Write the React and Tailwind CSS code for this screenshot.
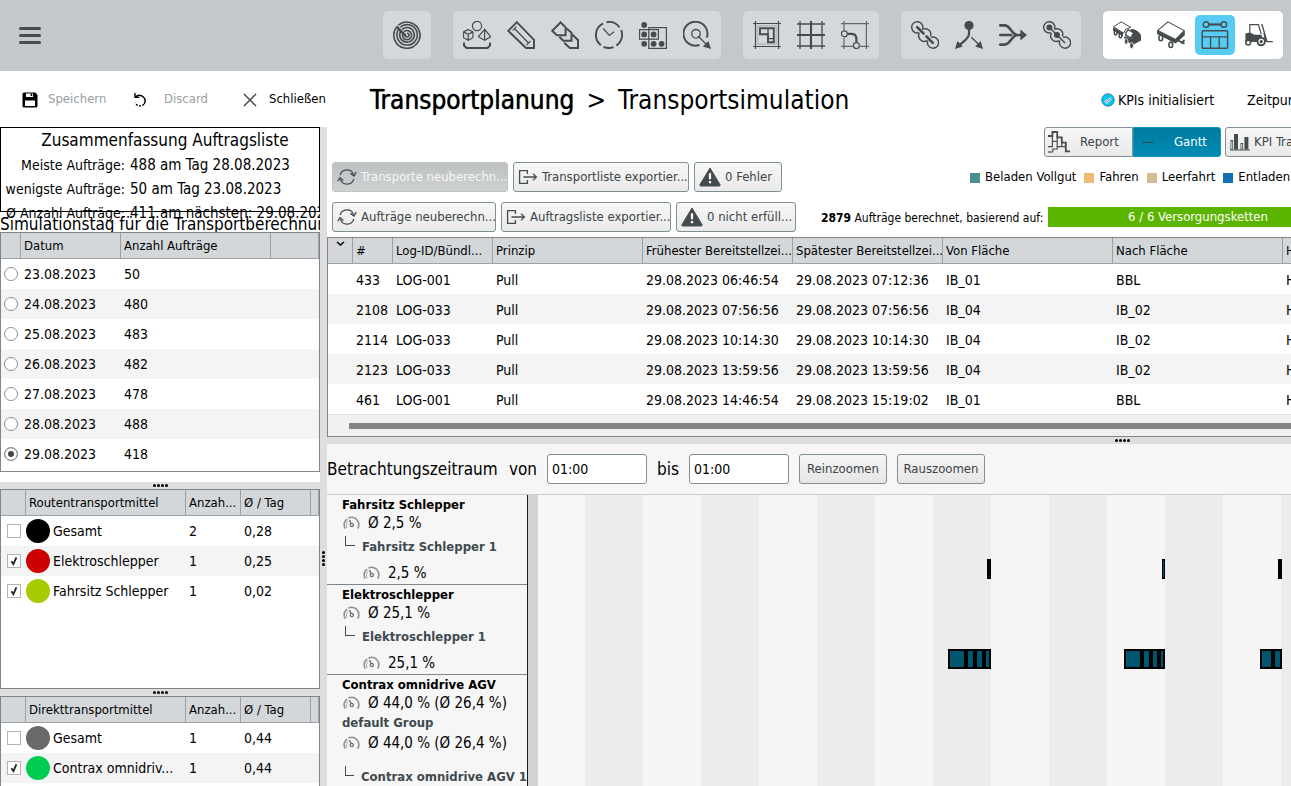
import React, { useState } from 'react';
import clsx from 'clsx';

/* ---------- toolbar icons, all on a 28x28 grid ---------- */

const Icon = ({ children, sw = 1.5 }) => (
    <svg
        width="28"
        height="28"
        viewBox="0 0 28 28"
        fill="none"
        stroke="#464b4e"
        strokeWidth={sw}
        className="shrink-0"
        aria-hidden="true"
    >
        {children}
    </svg>
);

const RadarIcon = () => (
    <Icon sw={1.6}>
        <path d="M5.4 4.2A13.1 13.1 0 1 1 3.2 6.6" />
        <path d="M7.4 6.2A10.2 10.2 0 1 1 5.4 8.6" />
        <path d="M9.2 8.4A7.3 7.3 0 1 1 7.6 10.4" />
        <path d="M11 10.6A4.6 4.6 0 1 1 9.9 12" />
        <path d="M14 12.2A1.9 1.9 0 1 1 12.2 14" />
        <path d="M3.4 5.4l9.4 9.4" strokeWidth="2.4" />
    </Icon>
);

const ObjectsIcon = () => (
    <Icon sw={1.2}>
        <circle cx="14" cy="5" r="4.6" />
        <path d="M5.2 8.5l4.7 2.4v5.8l-4.7 2.6-4.7-2.6v-5.8zM.5 10.9l4.7 2.4 4.7-2.4M5.2 13.3v6" />
        <path d="M21.6 8.3l-6.2 7.4 6.2 3.6 6-3.6zM21.6 8.3v11" />
        <path d="M1 21.5v3l2.5 2.5h21l2.5-2.5v-3" strokeWidth="2" />
    </Icon>
);

const RulerIcon = () => (
    <Icon sw={1.9}>
        <path d="M1.2 9.8L9.8 1.2 27 18.8V27h-8z" />
        <path d="M7.5 7.5l14 14.5M5.8 9.3l3.6-3.6M19.6 24l3.8-3.8" strokeWidth="1.2" />
    </Icon>
);

const StackIcon = () => (
    <Icon sw={2}>
        <path d="M1.3 9.8L9.6 1.4l5 5v7.8H5.8z" />
        <path d="M15.5 7.5l5 4.2v8h-8.2l-4-4" />
        <path d="M21.2 13.5L27 19v8h-8.2l-5.6-5.3" />
    </Icon>
);

const ClockIcon = () => (
    <Icon sw={1.9}>
        <path d="M11.5 1.2A13 13 0 0 1 24.5 6.4M26.2 9.2A13 13 0 0 1 21.5 24.6M18.5 26.2A13 13 0 0 1 8.5 25.8M5.8 24.2A13 13 0 0 1 8.2 2.4" />
        <path d="M8.2 7.5l6.2 7 4.6-3.8" strokeWidth="1.2" />
    </Icon>
);

const MatrixIcon = () => (
    <Icon sw={1.2}>
        <rect x=".6" y="8.6" width="18.8" height="9.6" />
        <rect x="9.8" y="6.6" width="17.6" height="20.8" />
        <g fill="#464b4e" stroke="none">
            <circle cx="5.2" cy="4" r="2.9" />
            <circle cx="5.2" cy="13.4" r="2.9" />
            <circle cx="14.6" cy="13.4" r="2.9" />
            <circle cx="5.2" cy="22.8" r="2.9" />
            <circle cx="14.6" cy="22.8" r="2.9" />
            <circle cx="22.6" cy="22.8" r="2.9" />
        </g>
    </Icon>
);

const TargetIcon = () => (
    <Icon sw={1.9}>
        <path d="M23.8 16.6A12 12 0 1 0 16.5 24" />
        <circle cx="13" cy="12.8" r="4.3" strokeWidth="1.3" />
        <path d="M15 15l8 8" strokeWidth="1.3" />
        <path d="M28 28l-2.6-8-5.6 5.6z" fill="#464b4e" stroke="none" />
    </Icon>
);

const LayoutIcon = () => (
    <Icon sw={1.2}>
        <path d="M2.5 0v28M25.5 0v28M0 2.5h28M0 25.5h28" />
        <path d="M4.8 4.8h18.4v18.4H4.8z" strokeWidth=".5" opacity=".6" />
        <path d="M7 7.2h13.8v14H15v-8H7z" strokeWidth="1.9" />
        <path d="M15 7v6.5M15 17.6h5.6" strokeWidth="1.3" />
    </Icon>
);

const GridIcon = () => (
    <Icon sw={1.3}>
        <path d="M3 0v28M25 0v28M0 3h28M0 25h28" />
        <path d="M14 0v28M0 14h28" strokeWidth="2.1" />
    </Icon>
);

const RouteIcon = () => (
    <Icon sw={1.2}>
        <path d="M3 0v9M3 17v11M0 2.6h28M25.4 0v28M0 25.4h12M19 25.4h9" opacity=".8" />
        <path d="M6.4 12.8h4c3.4 0 5 1.7 5 5v3.4" strokeWidth="2.2" />
        <circle cx="3.4" cy="12.8" r="3" />
        <circle cx="15.4" cy="24.6" r="3" />
    </Icon>
);

const ChainIcon = () => (
    <Icon sw={1.4}>
        <path d="M11.4 8.6A5.6 5.6 0 1 0 8.2 11.6" />
        <path d="M12 8.2a5.6 5.6 0 0 1 7.4 7.2M8.4 12a5.6 5.6 0 0 0 7.6 7.6" />
        <path d="M16.8 19.6a5.6 5.6 0 1 0 3.2-3.2" />
        <path d="M6.2 6.2l6.3 6.3M15.5 15.5l6.3 6.3" strokeWidth="2.6" strokeLinecap="round" />
    </Icon>
);

const ForkIcon = () => (
    <Icon sw={2.2}>
        <path d="M14 6v7c0 3-2 4.4-4 6.4l-5.6 4.8" />
        <path d="M16.4 16.2l7.6 7.6" strokeWidth="1.3" />
        <g fill="#464b4e" stroke="none">
            <circle cx="14" cy="4.5" r="4.6" />
            <path d="M0 28l2.4-8 5.4 5.6zM28 28l-2.4-8-5.4 5.6z" />
        </g>
    </Icon>
);

const MergeIcon = () => (
    <Icon sw={2.6}>
        <path d="M1.2 4.4h4.3c3 0 4.6 2 6.6 4.8 2.2 3 3.6 4.8 7 4.8h4M1.2 14h11M1.2 23.6h4.3c3 0 4.6-2 6.6-4.8 2.2-3 3.6-4.8 7-4.8" strokeLinecap="round" />
        <path d="M21.4 8.6L28 14l-6.6 5.4z" fill="#464b4e" stroke="none" />
    </Icon>
);

const ChainNodesIcon = () => (
    <Icon sw={1.4}>
        <path d="M11.4 8.6A5.6 5.6 0 1 0 8.2 11.6" />
        <path d="M12 8.2a5.6 5.6 0 0 1 7.4 7.2M8.4 12a5.6 5.6 0 0 0 7.6 7.6" />
        <path d="M16.8 19.6a5.6 5.6 0 1 0 3.2-3.2" />
        <path d="M6.2 6.2L22 22" />
        <circle cx="6.4" cy="6.4" r="3" fill="#464b4e" stroke="none" />
        <circle cx="14" cy="14" r="3" fill="#464b4e" stroke="none" />
    </Icon>
);

const TuggerIcon = () => (
    <Icon sw={1}>
        <path d="M.6 5.8L8.2.8l9.6 5.6-5 1.8-2.2 4z" />
        <path d="M0 6.2l10 5.6v3.6L0 10z" fill="#464b4e" stroke="none" />
        <ellipse cx="2.6" cy="12" rx="1.3" ry="1.9" fill="#fff" strokeWidth="1.5" />
        <ellipse cx="7.4" cy="15" rx="1.3" ry="1.9" fill="#fff" strokeWidth="1.5" />
        <path d="M17.6 8.2c3.4-.8 9 2.4 10.4 6.2v5.2l-8.6 4.6-8-5.6V15l8 3z" fill="#464b4e" stroke="none" />
        <path d="M12.6 14.2c.2-2.4 1.2-4.4 2.6-5.4l5.6 3.2c-1.4 1-2.2 2.8-2.4 5.2z" fill="#fff" strokeWidth="1.3" />
        <ellipse cx="13.2" cy="20.4" rx="1.8" ry="2.8" fill="#464b4e" stroke="#fff" strokeWidth=".8" />
        <ellipse cx="18.6" cy="24.6" rx="1.9" ry="3" fill="#464b4e" stroke="#fff" strokeWidth=".8" />
    </Icon>
);

const TrailerIcon = () => (
    <Icon sw={1.1}>
        <path d="M.8 9.4L11 .8 27.2 9.6l-8.8 9z" />
        <path d="M0 9.2l18.4 9L27.8 9.4v4.8l-9.2 8.4L0 13z" fill="#464b4e" stroke="none" />
        <ellipse cx="3.8" cy="17" rx="1.9" ry="2.7" fill="#fff" strokeWidth="1.6" />
        <ellipse cx="13.8" cy="23.8" rx="1.9" ry="2.7" fill="#fff" strokeWidth="1.6" />
        <path d="M20.5 19.2l7 3.4M27.6 19l-3.4 3.4" strokeWidth="1.8" />
    </Icon>
);

const ScheduleIcon = () => (
    <Icon sw={1.4}>
        <circle cx="5" cy="3.5" r="2.8" />
        <circle cx="22.8" cy="3.5" r="2.8" />
        <path d="M7.8 3.5h12.2" strokeWidth="2.2" />
        <rect x="1.2" y="9.8" width="25.4" height="17.4" rx="1" />
        <path d="M1.2 15.8h25.4M9.6 15.8v11.4M18.2 15.8v11.4" strokeWidth="1.3" />
    </Icon>
);

const ForkliftIcon = () => (
    <Icon sw={1.2}>
        <path d="M4.8 12.4V3.6h8.6l2.8 9.4" />
        <path d="M.4 12.6l4.4-1 4.6 2.2h7l1.4 4.2v3H.4z" fill="#464b4e" stroke="none" />
        <circle cx="3.2" cy="21.6" r="2.4" fill="#fff" strokeWidth="1.5" />
        <circle cx="16.2" cy="20.6" r="3.7" fill="#fff" strokeWidth="1.9" />
        <circle cx="16.2" cy="20.6" r="1" fill="#464b4e" />
        <path d="M16.8 3l5.2 17.6h5.8M19 12l1.6 8.6" strokeWidth="1.3" />
    </Icon>
);

/* ---------- small icons ---------- */

const RefreshIcon = () => (
    <svg width="20" height="18" viewBox="0 0 20 18" fill="none" stroke="#464b4e" strokeWidth="1.3" className="shrink-0" aria-hidden="true">
        <path d="M3.2 7.2a7 7 0 0 1 13.4-.6M16.8 10.8a7 7 0 0 1-13.4.6" />
        <path d="M.8 13.2L3 9.8l3.4 2.6M19.2 4.2L17 8l-3.6-2.6" />
    </svg>
);

const ExportIcon = () => (
    <svg width="20" height="16" viewBox="0 0 20 16" fill="none" stroke="#464b4e" strokeWidth="1.3" className="shrink-0" aria-hidden="true">
        <path d="M9.4 5V1.6H1.6v12.8h7.8V11M5.4 8h12.8M15 4.6L18.4 8 15 11.4" />
    </svg>
);

const WarnIcon = () => (
    <svg width="22" height="20" viewBox="0 0 22 20" className="shrink-0" aria-hidden="true">
        <path d="M11 1L21 17.6a1 1 0 0 1-.9 1.4H1.9a1 1 0 0 1-.9-1.4z" fill="#464b4e" stroke="#464b4e" strokeLinejoin="round" />
        <path d="M11 6.2v6M11 14v2.2" stroke="#fff" strokeWidth="2.2" />
    </svg>
);

const GaugeIcon = () => (
    <svg width="17" height="14" viewBox="0 0 17 14" fill="none" stroke="#8f9294" strokeWidth="1.6" className="shrink-0" aria-hidden="true">
        <path d="M2.2 12.6C.4 9 1.2 5.4 4.2 3.2M5.4 2.2c2.6-1.4 5.8-1 8 1C16 5.8 16.4 9.4 14.8 12.6" />
        <path d="M4 12c-1-2.6-.6-5 1.2-6.8" strokeWidth=".8" />
        <circle cx="8.8" cy="9" r="1.6" stroke="#6d7072" strokeWidth="1.3" />
        <path d="M8 7.8L6.6 4" stroke="#6d7072" strokeWidth="1.3" />
    </svg>
);

const ReportIcon = () => (
    <svg width="22" height="22" viewBox="0 0 22 22" fill="none" stroke="#464b4e" strokeWidth="1.2" aria-hidden="true">
        <path d="M0 5h4.4V1h4.8v5.4h4.6v5.2h4v8.8H22" strokeWidth="1.8" />
        <path d="M4.4 5v5.4h4.8V6.4M0 15.6h4.4v-5M9.2 10.4v5.2h4.6V10M13.8 15.6h4M4.8 20.8V18h4.4v-2.4" />
        <path d="M0 21h4.8" />
    </svg>
);

const BarsIcon = () => (
    <svg width="20" height="18" viewBox="0 0 20 18" fill="#464b4e" className="shrink-0" aria-hidden="true">
        <path d="M.5 7h2.6v9.5H.5zM4 1h4v15.5H4zM10.5 10h2.6v6.5h-2.6zM14.4 4h4v12.5h-4z" />
        <path d="M0 17h20" stroke="#464b4e" />
        <path d="M1.8 8.2v7.6M11.8 11v4.8" stroke="#eee" strokeWidth="1" />
    </svg>
);

/* ---------- data ---------- */

const NAV_GROUPS = [
    [['Übersicht', RadarIcon]],
    [
        ['Objekte', ObjectsIcon],
        ['Maße', RulerIcon],
        ['Stapel', StackIcon],
        ['Zeiten', ClockIcon],
        ['Matrix', MatrixIcon],
        ['Ziel', TargetIcon],
    ],
    [
        ['Layout', LayoutIcon],
        ['Raster', GridIcon],
        ['Wege', RouteIcon],
    ],
    [
        ['Ketten', ChainIcon],
        ['Verteilen', ForkIcon],
        ['Zusammenführen', MergeIcon],
        ['Knoten', ChainNodesIcon],
    ],
    [
        ['Routenzug', TuggerIcon],
        ['Anhänger', TrailerIcon],
        ['Simulation', ScheduleIcon],
        ['Stapler', ForkliftIcon],
    ],
];

const DAYS = [
    ['23.08.2023', 50],
    ['24.08.2023', 480],
    ['25.08.2023', 483],
    ['26.08.2023', 482],
    ['27.08.2023', 478],
    ['28.08.2023', 488],
    ['29.08.2023', 418],
];

const ROUTE_VEHICLES = [
    { name: 'Gesamt', color: '#000000', count: 2, avg: '0,28', on: false },
    { name: 'Elektroschlepper', color: '#cc0000', count: 1, avg: '0,25', on: true },
    { name: 'Fahrsitz Schlepper', color: '#a4cc00', count: 1, avg: '0,02', on: true },
];

const DIRECT_VEHICLES = [
    { name: 'Gesamt', color: '#696969', count: 1, avg: '0,44', on: false },
    { name: 'Contrax omnidriv...', color: '#00cc52', count: 1, avg: '0,44', on: true },
];

const ORDER_HEAD = [
    '#',
    'Log-ID/Bündl...',
    'Prinzip',
    'Frühester Bereitstellzei...',
    'Spätester Bereitstellzei...',
    'Von Fläche',
    'Nach Fläche',
    'H',
];

const ORDERS = [
    ['433', 'LOG-001', 'Pull', '29.08.2023 06:46:54', '29.08.2023 07:12:36', 'IB_01', 'BBL', 'H'],
    ['2108', 'LOG-033', 'Pull', '29.08.2023 07:56:56', '29.08.2023 07:56:56', 'IB_04', 'IB_02', 'H'],
    ['2114', 'LOG-033', 'Pull', '29.08.2023 10:14:30', '29.08.2023 10:14:30', 'IB_04', 'IB_02', 'H'],
    ['2123', 'LOG-033', 'Pull', '29.08.2023 13:59:56', '29.08.2023 13:59:56', 'IB_04', 'IB_02', 'H'],
    ['461', 'LOG-001', 'Pull', '29.08.2023 14:46:54', '29.08.2023 15:19:02', 'IB_01', 'BBL', 'H'],
];

// bar positions in px from the start of the time axis: [left, width, filled segments]
const TRIPS_SEAT = [
    [449, 4, []],
    [624, 3, [[1, 1]]],
    [740, 4, []],
];
const TRIPS_ELECTRIC = [
    [410, 43, [[2, 14], [20, 5], [29, 5], [38, 3]]],
    [586, 41, [[2, 14], [20, 5], [29, 4], [37, 2]]],
    [722, 22, [[2, 9], [15, 5]]],
];

/* ---------- building blocks ---------- */

const ToolButton = ({ icon, children, width, disabled }) => (
    <button
        type="button"
        disabled={disabled}
        className={clsx(
            'h-[30px] shrink-0 flex items-center gap-1 overflow-hidden px-1 rounded-[3px] border text-[13px] whitespace-nowrap',
            width,
            disabled
                ? 'bg-linear-to-b from-[#bcc0c1] to-[#cfd2d3] border-[#c0c4c6] text-[#f7f7f7]'
                : 'bg-linear-to-b from-[#f7f7f7] to-[#e9e9e9] border-[#7f9096] text-[#3c4448]'
        )}
    >
        {icon}
        <span className="pt-px">{children}</span>
    </button>
);

const Dots = ({ vertical }) => (
    <span className={clsx('flex gap-px', vertical && 'flex-col')}>
        {[0, 1, 2, 3].map((i) => (
            <i key={i} className="size-[3px] rounded-full bg-black" />
        ))}
    </span>
);

const Th = ({ children }) => (
    <th className="h-[26px] px-[3px] pt-0.5 border-r border-b border-[#9aa2a7] text-left text-[13px] font-normal whitespace-nowrap">
        {children}
    </th>
);

const VehicleTable = ({ title, rows }) => (
    <table className="w-full table-fixed border-separate border-spacing-0">
        <colgroup>
            <col className="w-[25px]" />
            <col className="w-[160px]" />
            <col className="w-[55px]" />
            <col className="w-[70px]" />
            <col />
        </colgroup>
        <thead className="bg-[#d3d7da]">
            <tr>
                <Th />
                <Th>{title}</Th>
                <Th>Anzah...</Th>
                <Th>Ø / Tag</Th>
                <Th />
            </tr>
        </thead>
        <tbody>
            {rows.map((v) => (
                <tr key={v.name} className="h-[30px] even:bg-[#f4f4f4]">
                    <td>
                        <label className="ml-1.5 grid size-3.5 place-items-center">
                            <input
                                type="checkbox"
                                aria-label={v.name}
                                defaultChecked={v.on}
                                className="peer col-start-1 row-start-1 size-3.5 appearance-none border border-[#b4b4b4] bg-white"
                            />
                            <svg
                                viewBox="0 0 14 14"
                                className="pointer-events-none invisible col-start-1 row-start-1 size-3.5 peer-checked:visible"
                                fill="none"
                                stroke="#222"
                                strokeWidth="1.8"
                            >
                                <path d="M4.4 7.2l2 3 3-6.8" />
                            </svg>
                        </label>
                    </td>
                    <td>
                        <div className="flex items-center gap-[3px] whitespace-nowrap">
                            <i className="size-6 shrink-0 rounded-full" style={{ backgroundColor: v.color }} />
                            {v.name}
                        </div>
                    </td>
                    <td className="px-[3px]">{v.count}</td>
                    <td className="px-[3px]">{v.avg}</td>
                    <td />
                </tr>
            ))}
        </tbody>
    </table>
);

const Header = () => (
    <header className="flex h-[71px] shrink-0 items-center justify-between bg-[#c4c8cb] pr-2 pb-px pl-[19px]">
        <button type="button" aria-label="Menü" className="flex w-[22px] flex-col gap-1">
            <span className="h-[3px] rounded-full bg-[#464b4e]" />
            <span className="h-[3px] rounded-full bg-[#464b4e]" />
            <span className="h-[3px] rounded-full bg-[#464b4e]" />
        </button>
        <nav className="flex gap-[22px]">
            {NAV_GROUPS.map((group, i) => (
                <div
                    key={i}
                    className={clsx('flex gap-1 rounded-[5px] p-1', i === 4 ? 'bg-white' : 'bg-[#d4d8db]')}
                >
                    {group.map(([label, Glyph]) => (
                        <button
                            key={label}
                            type="button"
                            aria-label={label}
                            className={clsx(
                                'grid size-10 place-items-center rounded-[5px]',
                                label === 'Simulation' && 'bg-[#56ccf2]'
                            )}
                        >
                            <Glyph />
                        </button>
                    ))}
                </div>
            ))}
        </nav>
    </header>
);

const ActionBar = () => (
    <div className="flex h-14 shrink-0 items-center pt-px">
        <div className="flex w-[370px] shrink-0 items-center pl-[22px] text-[13px]">
            <button type="button" className="flex w-[111px] items-center gap-2.5 text-[#9a9ea0]">
                <svg width="16" height="16" viewBox="0 0 16 16" aria-hidden="true">
                    <path d="M2 .5h11.4L15.5 3v11a1.5 1.5 0 0 1-1.5 1.5H2A1.5 1.5 0 0 1 .5 14V2A1.5 1.5 0 0 1 2 .5z" />
                    <path d="M4 1.5h7V5H4zM3 8.5h10V14H3z" fill="#fff" />
                    <path d="M8.6 1.5h1.6V4H8.6z" />
                </svg>
                Speichern
            </button>
            <button type="button" className="flex w-[110px] items-center gap-[17px] text-[#9a9ea0]">
                <svg width="14" height="16" viewBox="0 0 14 16" fill="none" stroke="#000" strokeWidth="1.4" aria-hidden="true">
                    <path d="M2 1v4.4h4.4M2.2 5.2C4.6 3 8 3 10.4 5c2 2 2.2 4.6.8 7" />
                    <path d="M11 12.2c-2.4 2.6-6.8 2.2-9-1.4" strokeDasharray="2 1.4" />
                </svg>
                Discard
            </button>
            <button type="button" className="flex items-center gap-3 text-black">
                <svg width="14" height="14" viewBox="0 0 14 14" stroke="#464b4e" strokeWidth="1.5" aria-hidden="true">
                    <path d="M1 1l12 12M13 1L1 13" />
                </svg>
                Schließen
            </button>
        </div>
        <h1 className="flex flex-1 gap-3 pt-px text-[26px] leading-8 whitespace-nowrap">
            <span className="[text-shadow:0_0_1px_#000]">Transportplanung</span>
            <span>&gt;</span>
            <span>Transportsimulation</span>
        </h1>
        <div className="flex w-[190px] shrink-0 items-center gap-[3px] text-sm whitespace-nowrap">
            <svg width="14" height="14" viewBox="0 0 14 14" className="shrink-0" aria-hidden="true">
                <circle cx="7" cy="7" r="6.2" fill="#00c8f5" stroke="#2a7fa0" />
                <path d="M4 7.4l2 2 4-4.2" fill="none" stroke="#fff" strokeWidth="2.4" />
                <path d="M4 7.4l2 2 4-4.2" fill="none" stroke="#246" strokeWidth=".8" />
            </svg>
            <span className="w-[126px] shrink-0">KPIs initialisiert</span>
            <span>Zeitpunkt</span>
        </div>
    </div>
);

const Sidebar = () => {
    const [day, setDay] = useState('29.08.2023');

    return (
        <aside className="flex w-80 shrink-0 flex-col overflow-hidden">
            <section className="h-[85px] shrink-0 border border-black whitespace-nowrap">
                <h2 className="pl-2.5 text-center text-[17px] leading-6">Zusammenfassung Auftragsliste</h2>
                <dl className="grid grid-cols-[124px_1fr] gap-x-[5px] pt-px leading-6">
                    <dt className="text-right">Meiste Aufträge:</dt>
                    <dd className="text-[15px]">488 am Tag 28.08.2023</dd>
                    <dt className="text-right">wenigste Aufträge:</dt>
                    <dd className="text-[15px]">50 am Tag 23.08.2023</dd>
                    <dt className="text-right">Ø Anzahl Aufträge:</dt>
                    <dd className="text-[15px]">411 am nächsten: 29.08.2023</dd>
                </dl>
            </section>
            <h2 className="h-5 shrink-0 overflow-hidden text-[17px] leading-6 whitespace-nowrap">
                Simulationstag für die Transportberechnung
            </h2>

            <div className="mb-2.5 h-60 shrink-0 border border-[#7f858a]">
                <table className="w-full table-fixed border-separate border-spacing-0">
                    <colgroup>
                        <col className="w-5" />
                        <col className="w-[100px]" />
                        <col className="w-[150px]" />
                        <col />
                    </colgroup>
                    <thead className="bg-[#d3d7da]">
                        <tr>
                            <Th />
                            <Th>Datum</Th>
                            <Th>Anzahl Aufträge</Th>
                            <Th />
                        </tr>
                    </thead>
                    <tbody>
                        {DAYS.map(([date, count]) => (
                            <tr key={date} className="h-[30px] even:bg-[#f4f4f4]">
                                <td>
                                    <input
                                        type="radio"
                                        name="day"
                                        aria-label={date}
                                        checked={day === date}
                                        onChange={() => setDay(date)}
                                        className="ml-[3px] block size-3.5 appearance-none rounded-full border border-[#8f8f8f] bg-white checked:bg-[#444] checked:shadow-[inset_0_0_0_3px_#fff]"
                                    />
                                </td>
                                <td className="px-[3px]">{date}</td>
                                <td className="px-[3px]">{count}</td>
                                <td />
                            </tr>
                        ))}
                    </tbody>
                </table>
            </div>

            <div className="flex h-[7px] shrink-0 items-center justify-center bg-[#dedede]">
                <Dots />
            </div>
            <div className="h-[200px] shrink-0 border border-[#7f858a]">
                <VehicleTable title="Routentransportmittel" rows={ROUTE_VEHICLES} />
            </div>
            <div className="flex h-[7px] shrink-0 items-center justify-center bg-[#dedede]">
                <Dots />
            </div>
            <div className="min-h-0 flex-1 border border-b-0 border-[#7f858a]">
                <VehicleTable title="Direkttransportmittel" rows={DIRECT_VEHICLES} />
            </div>
        </aside>
    );
};

const LEGEND = [
    ['Beladen Vollgut', 'bg-[#46918f]'],
    ['Fahren', 'bg-[#efba74]'],
    ['Leerfahrt', 'bg-[#d5bd92]'],
    ['Entladen', 'bg-[#1170b3]'],
];

const Controls = () => (
    <div className="flex shrink-0 flex-col pb-[5px] pl-[5px]">
        <div className="mb-[5px] flex justify-end">
            <div className="flex w-[247px] gap-1">
                <div className="flex shrink-0">
                    <button
                        type="button"
                        className="flex h-[30px] w-[89px] items-center gap-2.5 rounded-l-[3px] border border-[#7f9096] bg-linear-to-b from-[#f7f7f7] to-[#e9e9e9] pl-[3px] text-[13px] text-[#3c4448]"
                    >
                        <ReportIcon />
                        <span className="pt-px">Report</span>
                    </button>
                    <button
                        type="button"
                        className="flex h-[30px] w-[88px] items-center gap-5 rounded-r-[3px] border border-[#0a93be] bg-linear-to-b from-[#007a9f] to-[#008cb6] pl-2 text-[13px] text-white"
                    >
                        <span className="h-px w-3 bg-[#2f4a55]" />
                        <span className="pt-px">Gantt</span>
                    </button>
                </div>
                <ToolButton icon={<BarsIcon />} width="w-[120px]">
                    KPI Transport
                </ToolButton>
            </div>
        </div>
        <div className="mb-2.5 flex items-center gap-[5px]">
            <ToolButton disabled icon={<RefreshIcon />} width="w-[176px]">
                Transporte neuberechn...
            </ToolButton>
            <ToolButton icon={<ExportIcon />} width="w-[176px]">
                Transportliste exportier...
            </ToolButton>
            <ToolButton icon={<WarnIcon />} width="w-[88px]">
                0 Fehler
            </ToolButton>
            <ul className="ml-auto flex w-[321px] gap-2 pt-px text-[13px] whitespace-nowrap">
                {LEGEND.map(([label, color]) => (
                    <li key={label} className="flex items-center gap-[5px]">
                        <i className={clsx('size-2.5', color)} />
                        {label}
                    </li>
                ))}
            </ul>
        </div>
        <div className="flex items-center gap-[5px]">
            <ToolButton icon={<RefreshIcon />} width="w-[164px]">
                Aufträge neuberechn...
            </ToolButton>
            <ToolButton icon={<ExportIcon />} width="w-[170px]">
                Auftragsliste exportier...
            </ToolButton>
            <ToolButton icon={<WarnIcon />} width="w-[120px]">
                0 nicht erfüll...
            </ToolButton>
            <p className="ml-auto w-[222px] shrink-0 pt-px text-right text-xs whitespace-nowrap">
                <b>2879</b> Aufträge berechnet, basierend auf:
            </p>
            <div className="w-[243px] shrink-0">
                <div className="h-5 w-[300px] bg-[#5bb500] text-center text-[13px] leading-5 text-white">
                    6 / 6 Versorgungsketten
                </div>
            </div>
        </div>
    </div>
);

const OrderTable = () => (
    <div className="shrink-0 overflow-hidden border border-r-0 border-[#7f858a]">
        <table className="w-[1105px] table-fixed border-separate border-spacing-0">
            <colgroup>
                <col className="w-[25px]" />
                <col className="w-10" />
                <col className="w-[100px]" />
                <col className="w-[150px]" />
                <col className="w-[150px]" />
                <col className="w-[150px]" />
                <col className="w-[170px]" />
                <col className="w-[170px]" />
                <col className="w-[150px]" />
            </colgroup>
            <thead className="bg-[#d3d7da]">
                <tr>
                    <Th>
                        <svg width="9" height="22" viewBox="0 0 9 22" className="mx-auto" fill="none" stroke="#000" strokeWidth="1.6">
                            <path d="M1 1l3.5 3L8 1" />
                        </svg>
                    </Th>
                    {ORDER_HEAD.map((h) => (
                        <Th key={h}>{h}</Th>
                    ))}
                </tr>
            </thead>
            <tbody>
                {ORDERS.map((row) => (
                    <tr key={row[0]} className="h-[30px] whitespace-nowrap even:bg-[#f4f4f4]">
                        <td />
                        {row.map((cell, i) => (
                            <td key={i} className="px-[3px] pt-0.5">
                                {cell}
                            </td>
                        ))}
                    </tr>
                ))}
            </tbody>
        </table>
        <div className="flex h-[22px] items-center border-t border-[#e3e3e3] bg-[#f0f0f0] pl-[21px]">
            <div className="h-1.5 flex-1 bg-[#858585]" />
        </div>
    </div>
);

const ZoomBar = () => (
    <div className="flex h-[51px] shrink-0 items-center gap-2.5 border-b border-[#c9d0d3] text-[17px] whitespace-nowrap">
        <label htmlFor="from" className="flex w-[210px] justify-between">
            <span>Betrachtungszeitraum</span>
            <span>von</span>
        </label>
        <input
            id="from"
            defaultValue="01:00"
            className="h-[30px] w-[100px] rounded-[3px] border border-[#7f9096] bg-white px-1 text-sm"
        />
        <label htmlFor="to" className="w-[22px]">
            bis
        </label>
        <input
            id="to"
            defaultValue="01:00"
            className="h-[30px] w-[100px] rounded-[3px] border border-[#7f9096] bg-white px-1 text-sm"
        />
        {['Reinzoomen', 'Rauszoomen'].map((t) => (
            <button
                key={t}
                type="button"
                className="h-[30px] w-[88px] rounded-[3px] border border-[#7f9096] bg-linear-to-b from-[#f5f5f5] to-[#e6e6e6] pt-px text-[13px] text-[#3c4448]"
            >
                {t}
            </button>
        ))}
    </div>
);

const Load = ({ children, className }) => (
    <p className={clsx('flex items-center gap-2 text-[15px]', className)}>
        <GaugeIcon />
        <span className="pt-0.5">{children}</span>
    </p>
);

const Unit = ({ children, className }) => (
    <p className={clsx('flex items-center gap-[7px] pl-[18px] font-bold text-[#3f4a50]', className)}>
        <i className="mb-3 h-2.5 w-2.5 border-b border-l border-[#3f4a50]" />
        <span className="pt-px">{children}</span>
    </p>
);

const GroupName = ({ children }) => (
    <h3 className="pt-px pl-[15px] leading-[17px] font-bold">{children}</h3>
);

const GanttLabels = () => (
    <div className="w-[200px] shrink-0 overflow-hidden text-[13px] whitespace-nowrap">
        {[
            ['Fahrsitz Schlepper', '2,5 %'],
            ['Elektroschlepper', '25,1 %'],
        ].map(([name, load]) => (
            <section key={name} className="border-b border-[#7f858a]">
                <GroupName>{name}</GroupName>
                <Load className="h-5 pl-4">Ø {load}</Load>
                <Unit className="h-7">{name} 1</Unit>
                <Load className="h-[23px] pl-9">{load}</Load>
            </section>
        ))}
        <section>
            <GroupName>Contrax omnidrive AGV</GroupName>
            <Load className="h-5 pl-4">Ø 44,0 % (Ø 26,4 %)</Load>
            <div className="text-[#3f4a50]">
                <GroupName>default Group</GroupName>
            </div>
            <Load className="h-6 pl-4">Ø 44,0 % (Ø 26,4 %)</Load>
            <Unit className="h-11">Contrax omnidrive AGV 1</Unit>
        </section>
    </div>
);

const Lane = ({ trips }) => (
    <div className="relative h-[90px]">
        {trips.map(([left, width, fills]) => (
            <div key={left} className="absolute top-16 h-5 bg-black" style={{ left, width }}>
                {fills.map(([x, w]) => (
                    <i key={x} className="absolute inset-y-0.5 bg-[#00566e]" style={{ left: x, width: w }} />
                ))}
            </div>
        ))}
    </div>
);

const Gantt = () => (
    <div className="flex min-h-0 flex-1 overflow-hidden">
        <GanttLabels />
        <div className="w-[11px] shrink-0 border-l border-[#1a1a1a] bg-[#d2d2d2]" />
        <div className="grid flex-1 overflow-hidden">
            <div className="col-start-1 row-start-1 flex">
                <i className="w-[47px] shrink-0" />
                {Array.from({ length: 24 }, (_, i) => (
                    <i key={i} className="w-[58px] shrink-0 odd:bg-[#f5f5f5] even:bg-[#ebecee]" />
                ))}
            </div>
            <div className="col-start-1 row-start-1">
                <Lane trips={TRIPS_SEAT} />
                <Lane trips={TRIPS_ELECTRIC} />
            </div>
        </div>
    </div>
);

export default function App() {
    return (
        <div className="flex h-screen flex-col overflow-hidden bg-white font-['DejaVu_Sans_Condensed','Noto_Sans',sans-serif] text-sm text-black">
            <Header />
            <ActionBar />
            <div className="flex min-h-0 flex-1">
                <Sidebar />
                <div className="flex w-[7px] shrink-0 items-center justify-center bg-[#dedede] pb-[209px] pt-[412px]">
                    <Dots vertical />
                </div>
                <main className="flex min-w-0 flex-1 flex-col overflow-hidden">
                    <Controls />
                    <OrderTable />
                    <div className="flex h-[7px] shrink-0 items-center justify-center bg-[#dedede] pl-[626px]">
                        <Dots />
                    </div>
                    <div className="flex min-h-0 flex-1 flex-col bg-[#f6f6f6]">
                        <ZoomBar />
                        <Gantt />
                    </div>
                </main>
            </div>
        </div>
    );
}
